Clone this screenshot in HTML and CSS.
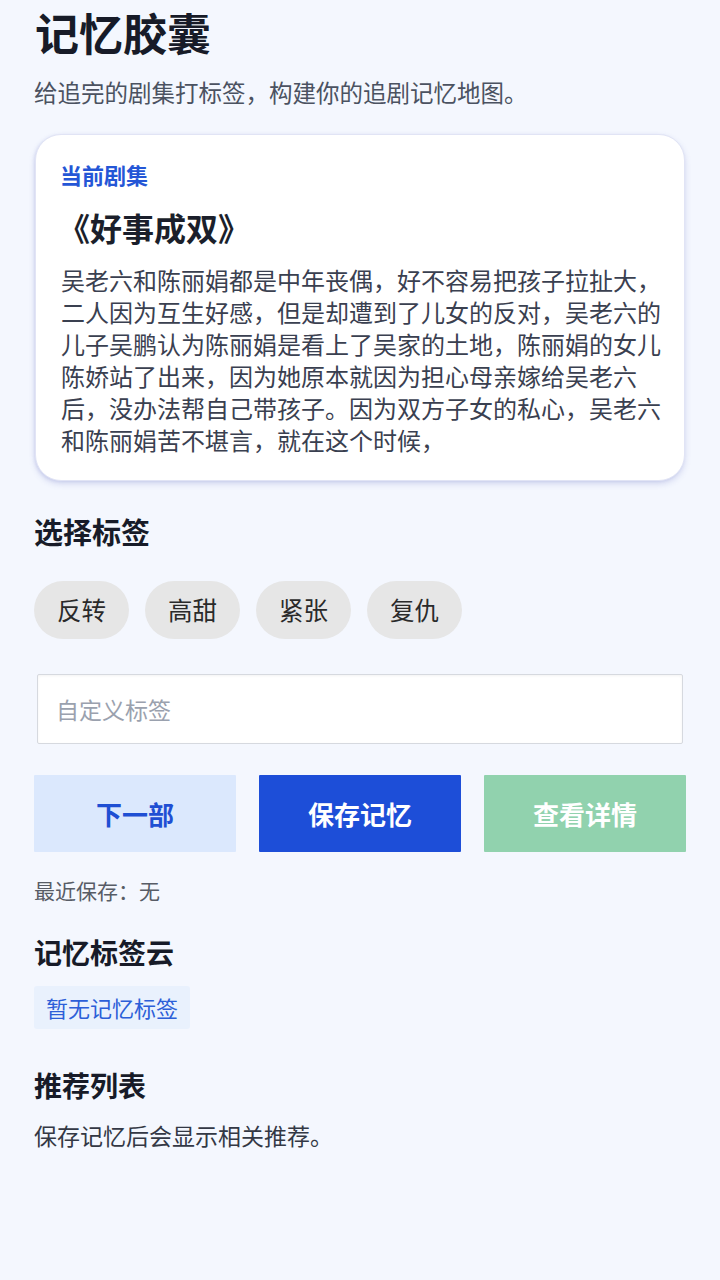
FILE: index.html
```html
<!DOCTYPE html>
<html lang="zh-CN">
<head>
<meta charset="utf-8">
<meta name="viewport" content="width=720">
<title>记忆胶囊</title>
<link rel="stylesheet" href="styles.css">
</head>
<body>
<main class="page">
  <h1 class="title">记忆胶囊</h1>
  <p class="subtitle">给追完的剧集打标签，构建你的追剧记忆地图。</p>

  <section class="card">
    <div class="card-label">当前剧集</div>
    <h2 class="card-title">《好事成双》</h2>
    <p class="card-text">吴老六和陈丽娟都是中年丧偶，好不容易把孩子拉扯大，二人因为互生好感，但是却遭到了儿女的反对，吴老六的儿子吴鹏认为陈丽娟是看上了吴家的土地，陈丽娟的女儿陈娇站了出来，因为她原本就因为担心母亲嫁给吴老六后，没办法帮自己带孩子。因为双方子女的私心，吴老六和陈丽娟苦不堪言，就在这个时候，</p>
  </section>

  <h3 class="section-title tags-title">选择标签</h3>
  <div class="chips">
    <span class="chip">反转</span>
    <span class="chip">高甜</span>
    <span class="chip">紧张</span>
    <span class="chip">复仇</span>
  </div>

  <input class="custom-input" type="text" placeholder="自定义标签">

  <div class="actions">
    <button class="btn btn-next">下一部</button>
    <button class="btn btn-save">保存记忆</button>
    <button class="btn btn-detail">查看详情</button>
  </div>

  <p class="recent">最近保存：无</p>

  <h3 class="section-title cloud-title">记忆标签云</h3>
  <div class="cloud">
    <span class="cloud-empty">暂无记忆标签</span>
  </div>

  <h3 class="section-title rec-title">推荐列表</h3>
  <p class="rec-text">保存记忆后会显示相关推荐。</p>
</main>
</body>
</html>
```

FILE: styles.css
```css
* {
  box-sizing: border-box;
}

html, body {
  margin: 0;
  padding: 0;
  background: #f4f7fe;
}

body {
  font-family: "Noto Sans CJK SC", "Noto Sans", sans-serif;
  color: #1f2433;
  min-height: 1280px;
}

.page {
  padding: 0 34px 40px;
  display: flex;
  flex-direction: column;
  align-items: stretch;
}

.title {
  margin: 4px 0 0 1px;
  font-size: 44px;
  line-height: 56px;
  font-weight: 700;
  color: #171b28;
}

.subtitle {
  margin: 17px 0 0;
  font-size: 23.5px;
  line-height: 30px;
  color: #4b5261;
}

.card {
  margin: 27px 1px 0;
  background: #ffffff;
  border: 1px solid #e1e4f5;
  border-radius: 26px;
  padding: 25px 22px 24px 25px;
  box-shadow: 0 3px 6px rgba(92, 100, 190, 0.20), -1px 1px 3px rgba(92, 100, 190, 0.12);
}

.card-label {
  margin-left: -1px;
  font-size: 22px;
  line-height: 28px;
  font-weight: 700;
  color: #2456d6;
}

.card-title {
  margin: 19px 0 0 -3px;
  font-size: 32px;
  line-height: 40px;
  font-weight: 700;
  color: #1b1f2b;
}

.card-text {
  margin: 17px 0 0;
  font-size: 24px;
  line-height: 32px;
  color: #3a4050;
}

.section-title {
  margin: 0;
  font-size: 28px;
  line-height: 36px;
  font-weight: 700;
  color: #171b28;
}

.tags-title {
  margin-top: 32px;
  font-size: 29px;
}

.chips {
  margin-top: 32px;
  display: flex;
  gap: 16px;
}

.chip {
  display: inline-block;
  padding: 12px 23px;
  font-size: 24.5px;
  line-height: 34px;
  background: #e6e6e6;
  color: #2a2a2a;
  border-radius: 29px;
}

.custom-input {
  margin: 35px 3px 0;
  height: 70px;
  padding: 0 18px;
  font-family: inherit;
  font-size: 23px;
  color: #222;
  background: #ffffff;
  border: 1.5px solid #d6d9df;
  border-radius: 2px;
  box-shadow: inset 0 1px 3px rgba(0, 0, 0, 0.05);
  outline: none;
}

.custom-input::placeholder {
  color: #9aa1ae;
}

.actions {
  margin-top: 31px;
  display: grid;
  grid-template-columns: 1fr 1fr 1fr;
  gap: 23px;
}

.btn {
  height: 77px;
  border: none;
  border-radius: 1px;
  font-family: inherit;
  font-size: 26px;
  font-weight: 700;
  padding: 0;
}

.btn-next {
  background: #dbe8fd;
  color: #1f4fd3;
}

.btn-save {
  background: #1d4ed8;
  color: #ffffff;
}

.btn-detail {
  background: #91d2ae;
  color: #ffffff;
}

.recent {
  margin: 24px 0 0;
  font-size: 21px;
  line-height: 28px;
  color: #575c66;
}

.cloud-title {
  margin-top: 30px;
}

.cloud {
  margin-top: 16px;
  display: flex;
}

.cloud-empty {
  padding: 7px 12px;
  font-size: 22px;
  line-height: 29px;
  background: #e9f1fd;
  color: #2c5fd8;
  border-radius: 3px;
}

.rec-title {
  margin-top: 38px;
}

.rec-text {
  margin: 17px 0 0;
  font-size: 23px;
  line-height: 30px;
  color: #333845;
}
```
